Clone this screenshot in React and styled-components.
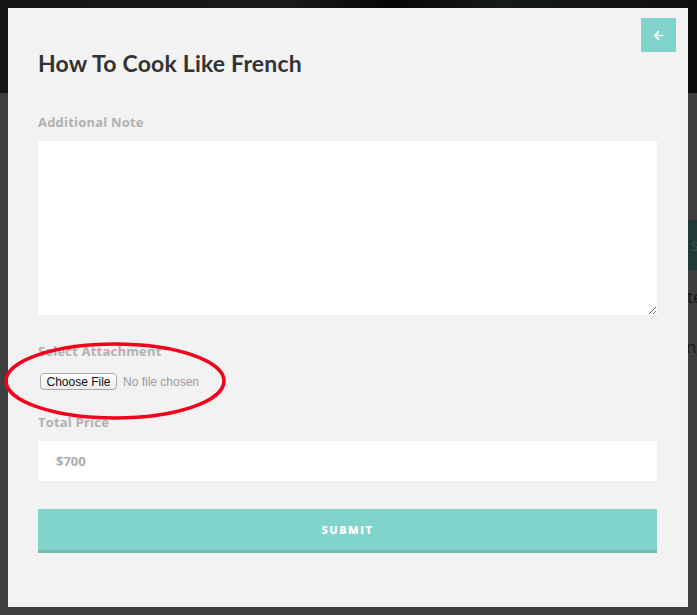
import React from 'react';
import styled, { createGlobalStyle } from 'styled-components';
import { FaArrowLeft } from 'react-icons/fa';

const GlobalStyle = createGlobalStyle`
    html, body {
        margin: 0;
        padding: 0;
        background: #3e3e3e;
    }
    * {
        box-sizing: border-box;
    }
`;

const StyledPage = styled.div`
    position: relative;
    width: 697px;
    height: 615px;
    overflow: hidden;
    background: #3e3e3e;
    font-family: 'Open Sans', 'Liberation Sans', sans-serif;
`;

const StyledHero = styled.div`
    height: 93px;
    background: linear-gradient(
        100deg,
        #141414 0%,
        #1a1a1a 40%,
        #060606 55%,
        #171a1a 70%,
        #0d0d0d 100%
    );
`;

const StyledSide = styled.div`
    margin-left: 688px;
    display: flex;
    flex-direction: column;
    width: 120px;
`;

const StyledSideBar = styled.div`
    margin-top: 127px;
    height: 50px;
    background: #1f3a37;
    color: #35524f;
    font-size: 16px;
    line-height: 50px;
    padding-left: 3px;
`;

const StyledSideText = styled.div`
    color: #161616;
    font-size: 17px;
    line-height: 20px;
    margin-top: ${props => props.gap}px;
    margin-left: ${props => props.shift}px;
    white-space: nowrap;
`;

const StyledModal = styled.div`
    position: absolute;
    top: 8px;
    left: 8px;
    width: 680px;
    height: 599px;
    background: #f2f2f2;
    padding: 40px 31px 0 30px;
    display: flex;
    flex-direction: column;
`;

const StyledClose = styled.button`
    position: absolute;
    top: 10px;
    right: 12px;
    width: 35px;
    height: 34px;
    border: none;
    background: #80d4cc;
    color: #fff;
    display: flex;
    align-items: center;
    justify-content: center;
    padding: 0;
    cursor: pointer;
`;

const StyledTitle = styled.h2`
    margin: 0;
    font-family: Lato, 'Liberation Sans', sans-serif;
    font-weight: 700;
    font-size: 23px;
    letter-spacing: 0.2px;
    line-height: 30px;
    color: #333;
`;

const StyledLabel = styled.label`
    display: block;
    margin-top: ${props => props.gap}px;
    font-size: 13px;
    font-weight: 700;
    letter-spacing: 0.2px;
    line-height: 18px;
    color: #b1b1b1;
`;

const StyledTextArea = styled.textarea`
    display: block;
    margin-top: 10px;
    width: 619px;
    height: 174px;
    border: none;
    background: #fff;
    outline: none;
    padding: 12px 18px;
    font-family: inherit;
`;

const StyledFileRow = styled.div`
    display: flex;
    align-items: center;
    gap: 6px;
    margin-top: 13px;
    padding-left: 2px;
    height: 17px;
    font-family: 'Liberation Sans', Arial, sans-serif;
    font-size: 12px;
`;

const StyledFileButton = styled.span`
    display: flex;
    align-items: center;
    justify-content: center;
    width: 77px;
    height: 17px;
    border: 1px solid #a9a9a9;
    border-radius: 4px;
    background: linear-gradient(#ffffff, #ececec);
    color: #111;
`;

const StyledFileStatus = styled.span`
    color: #9a9a9a;
`;

const StyledInput = styled.input`
    display: block;
    margin-top: 10px;
    width: 619px;
    height: 40px;
    border: none;
    outline: none;
    background: #fff;
    padding: 0 18px;
    font-family: inherit;
    font-size: 13px;
    font-weight: 700;
    color: #adadad;
`;

const StyledSubmit = styled.button`
    margin-top: 28px;
    width: 619px;
    height: 44px;
    border: none;
    border-bottom: 3px solid #6fb9b1;
    background: #80d4cc;
    color: #fff;
    font-family: inherit;
    font-size: 11px;
    font-weight: 800;
    letter-spacing: 1.5px;
    padding: 0;
    cursor: pointer;
`;

const StyledMark = styled.svg`
    position: absolute;
    left: 0;
    top: 338px;
    pointer-events: none;
`;

export default function App() {
    return (
        <>
            <GlobalStyle />
            <StyledPage>
                <StyledHero />
                <StyledSide>
                    <StyledSideBar>s</StyledSideBar>
                    <StyledSideText gap={17} shift={-1}>te</StyledSideText>
                    <StyledSideText gap={30} shift={-2}>ng</StyledSideText>
                </StyledSide>
                <StyledModal>
                    <StyledClose aria-label='Back'>
                        <FaArrowLeft size={11} />
                    </StyledClose>
                    <StyledTitle>How To Cook Like French</StyledTitle>
                    <StyledLabel gap={35}>Additional Note</StyledLabel>
                    <StyledTextArea />
                    <StyledLabel gap={27}>Select Attachment</StyledLabel>
                    <StyledFileRow>
                        <StyledFileButton>Choose File</StyledFileButton>
                        <StyledFileStatus>No file chosen</StyledFileStatus>
                    </StyledFileRow>
                    <StyledLabel gap={23}>Total Price</StyledLabel>
                    <StyledInput defaultValue='$700' readOnly />
                    <StyledSubmit>SUBMIT</StyledSubmit>
                </StyledModal>
                <StyledMark width='240' height='90' viewBox='0 0 240 90'>
                    <ellipse
                        cx='115'
                        cy='43'
                        rx='109'
                        ry='37'
                        fill='none'
                        stroke='#f5001c'
                        strokeWidth='3.5'
                    />
                </StyledMark>
            </StyledPage>
        </>
    );
}
